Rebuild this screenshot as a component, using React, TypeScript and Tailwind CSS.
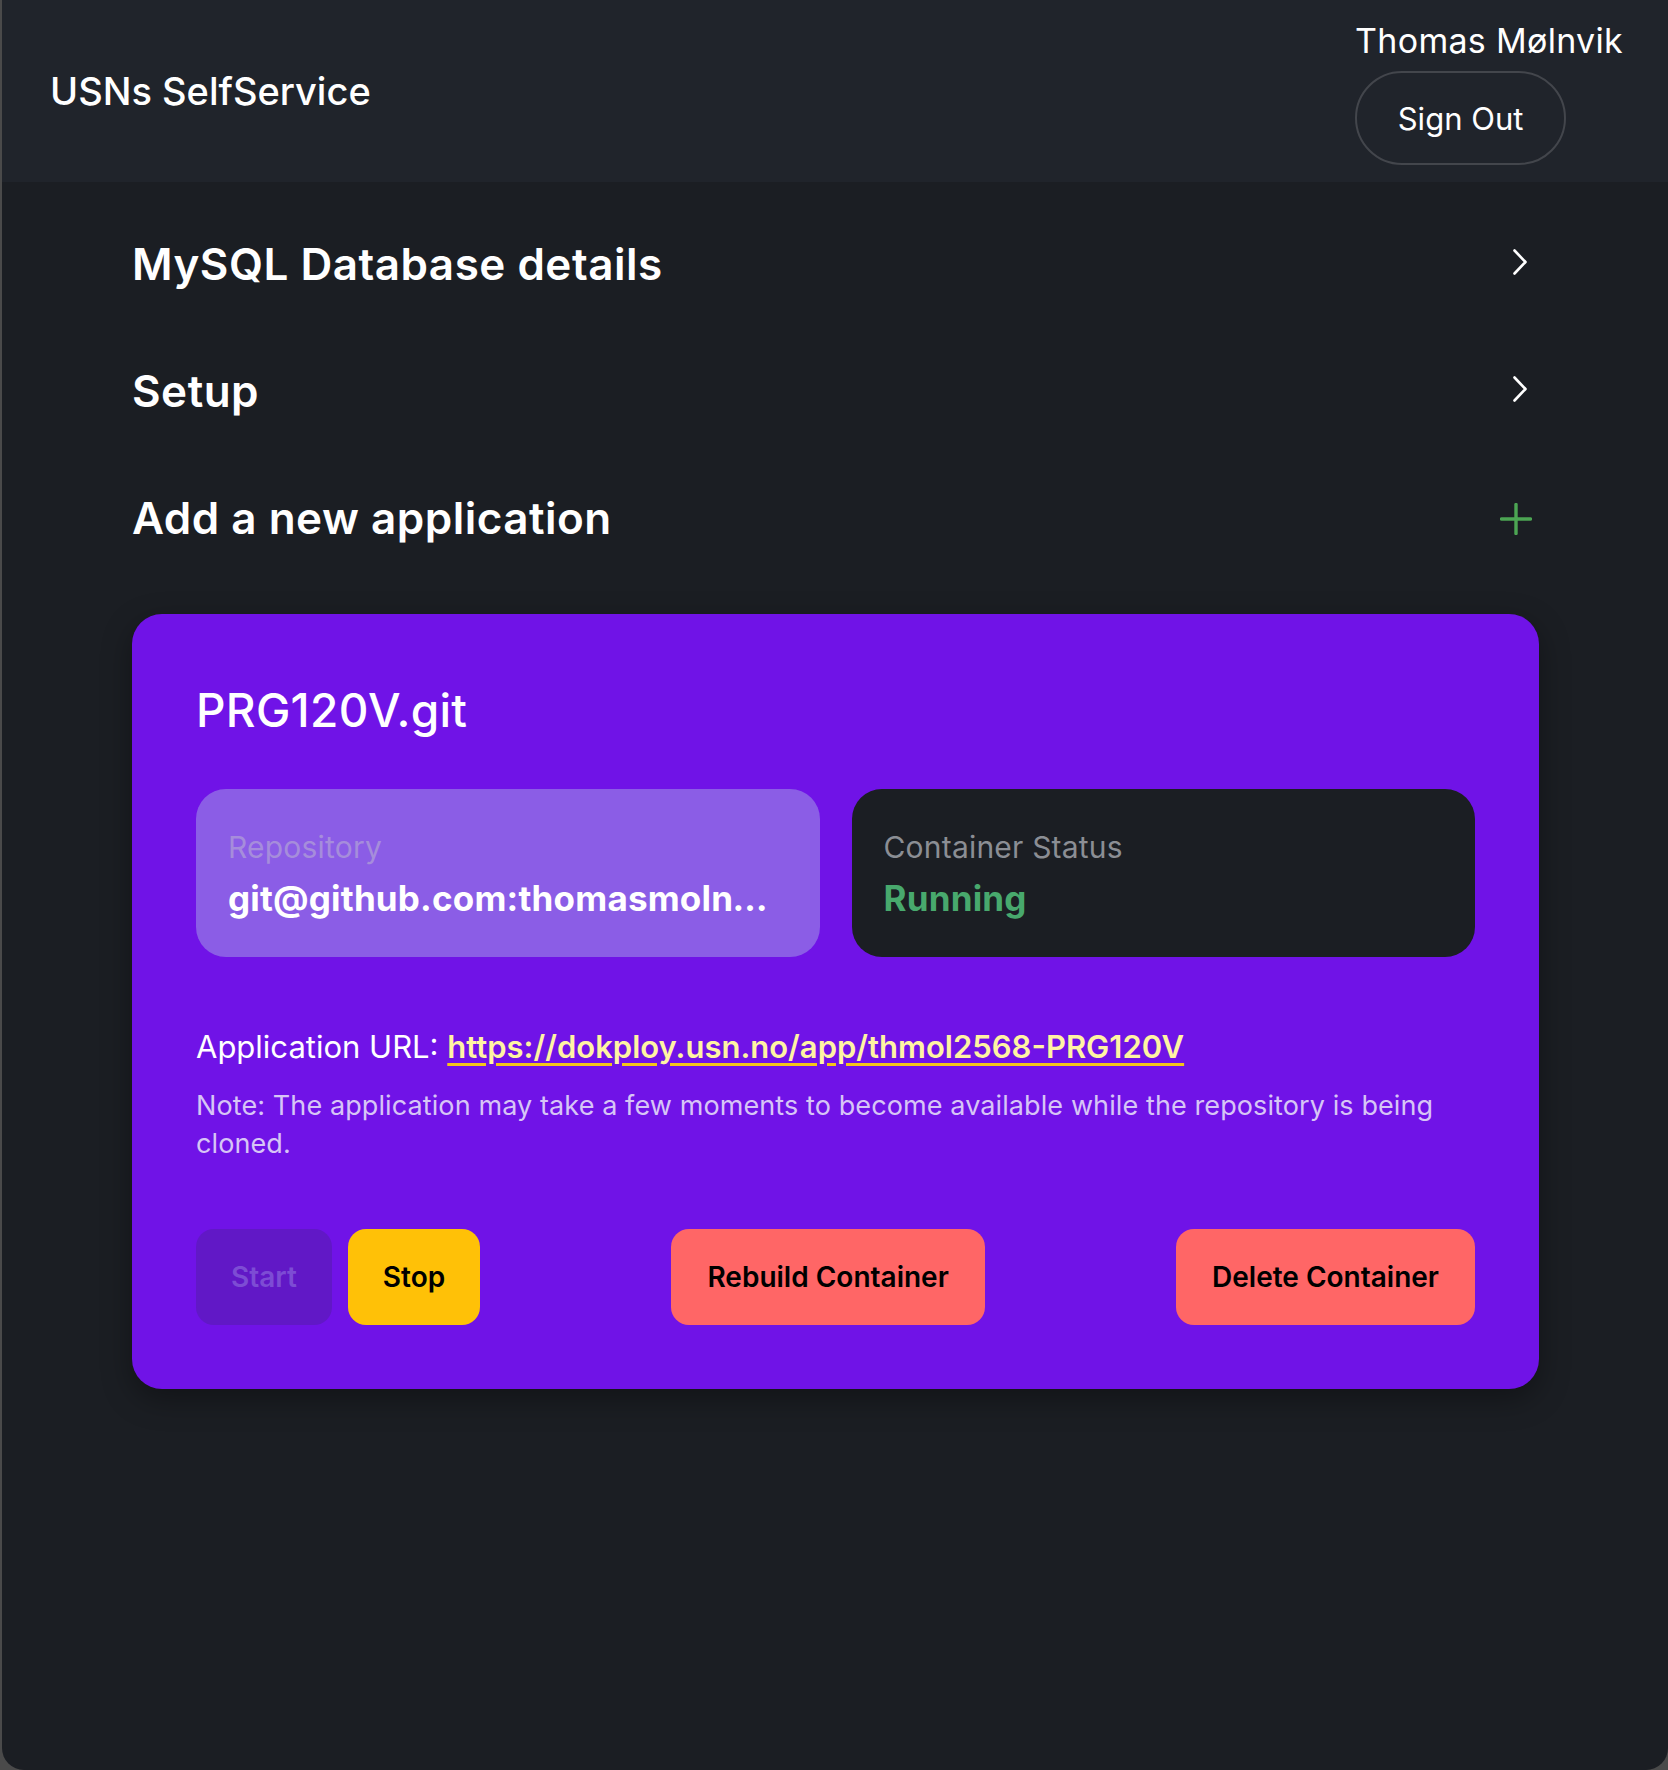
import React from "react";

const font = { fontFamily: "Inter, 'Noto Sans', sans-serif" };

function Chevron() {
  return (
    <svg width="32" height="32" viewBox="0 0 32 32" fill="none" className="-mt-[6px]">
      <polyline points="14.5,4.5 25.5,16 14.5,27.5" stroke="#ffffff" strokeWidth="2.6" strokeLinecap="round" strokeLinejoin="round" />
    </svg>
  );
}

function Plus() {
  return (
    <svg width="32" height="32" viewBox="0 0 32 32" fill="none">
      <line x1="16" y1="1.5" x2="16" y2="30.5" stroke="#4ca553" strokeWidth="3.4" strokeLinecap="round" />
      <line x1="1.5" y1="16" x2="30.5" y2="16" stroke="#4ca553" strokeWidth="3.4" strokeLinecap="round" />
    </svg>
  );
}

function Row({ title, icon }: { title: string; icon: React.ReactNode }) {
  return (
    <div className="h-[127px] flex items-center justify-between pl-0 pr-[7px]">
      <h2 className="text-[44px] font-semibold text-white leading-[51px] tracking-[0.5px]">{title}</h2>
      <div className="w-[32px] h-[32px] flex items-center justify-center">{icon}</div>
    </div>
  );
}

export default function App() {
  return (
    <div className="w-[1668px] h-[1770px] bg-[#4a4a4a]" style={font}>
      <div className="ml-[2px] h-[1770px] bg-[#1b1e23] rounded-bl-[22px] rounded-br-[22px] overflow-hidden flex flex-col">
        <header className="h-[182px] bg-[#20242b] flex items-center justify-between pl-[48px] pr-[45px] shrink-0">
          <div className="text-[38px] font-medium text-white leading-[46px] tracking-[0px]">USNs SelfService</div>
          <div className="flex flex-col items-start">
            <div className="text-[34px] text-white leading-[48px] tracking-[0.3px]">Thomas Mølnvik</div>
            <button className="mt-[6px] w-[211px] h-[94px] rounded-full border-2 border-[#43464c] text-white text-[31px] leading-none flex items-center justify-center">
              Sign Out
            </button>
          </div>
        </header>

        <main className="pt-[19px] pl-[130px] pr-[129px]">
          <Row title="MySQL Database details" icon={<Chevron />} />
          <Row title="Setup" icon={<Chevron />} />
          <Row title="Add a new application" icon={<Plus />} />

          <section className="mt-[32px] rounded-[30px] bg-[#7013e7] px-16 pb-16 pt-16 shadow-[0_10px_30px_rgba(0,0,0,0.35)]">
            <h3 className="text-[46px] font-medium text-white leading-[64px] tracking-[0.3px]">PRG120V.git</h3>

            <div className="mt-[47px] grid grid-cols-2 gap-8">
              <div className="h-[168px] rounded-[30px] bg-[#8b5de6] px-8 flex flex-col justify-center min-w-0">
                <div className="text-[30px] leading-[44px] text-[#a68ddb] tracking-[0.2px]">Repository</div>
                <div className="mt-[5px] text-[35px] leading-[48px] font-bold text-white truncate tracking-[0.2px]">
                  git@github.com:thomasmolnvik/PRG120V.git
                </div>
              </div>
              <div className="h-[168px] rounded-[30px] bg-[#1b1e23] px-8 flex flex-col justify-center min-w-0">
                <div className="text-[30px] leading-[44px] text-[#8b8e94] tracking-[0.2px]">Container Status</div>
                <div className="mt-[5px] text-[35px] leading-[48px] font-bold text-[#48a96d] tracking-[0.2px]">Running</div>
              </div>
            </div>

            <p className="mt-[67px] text-[31px] leading-[45px] text-white">
              Application URL:{" "}
              <a className="font-semibold text-[#fff4a3] underline decoration-[#f5c518] decoration-[3px] underline-offset-[5px]" href="#">
                https://dokploy.usn.no/app/thmol2568-PRG120V
              </a>
            </p>
            <p className="mt-[18px] text-[27px] leading-[38px] text-[#d7c5f6] tracking-[0.1px]">
              Note: The application may take a few moments to become available while the repository is being cloned.
            </p>

            <div className="mt-[66px] flex items-center justify-between">
              <div className="flex items-center gap-4">
                <button className="h-[96px] px-[35px] rounded-[18px] bg-[#6118c6] text-[#7d4cd4] text-[28px] font-semibold">Start</button>
                <button className="h-[96px] px-[35px] rounded-[18px] bg-[#ffc107] text-black text-[28px] font-semibold">Stop</button>
              </div>
              <button className="h-[96px] px-[36px] rounded-[18px] bg-[#ff6666] text-black text-[28px] font-semibold">Rebuild Container</button>
              <button className="h-[96px] px-[36px] rounded-[18px] bg-[#ff6666] text-black text-[28px] font-semibold">Delete Container</button>
            </div>
          </section>
        </main>
      </div>
    </div>
  );
}
